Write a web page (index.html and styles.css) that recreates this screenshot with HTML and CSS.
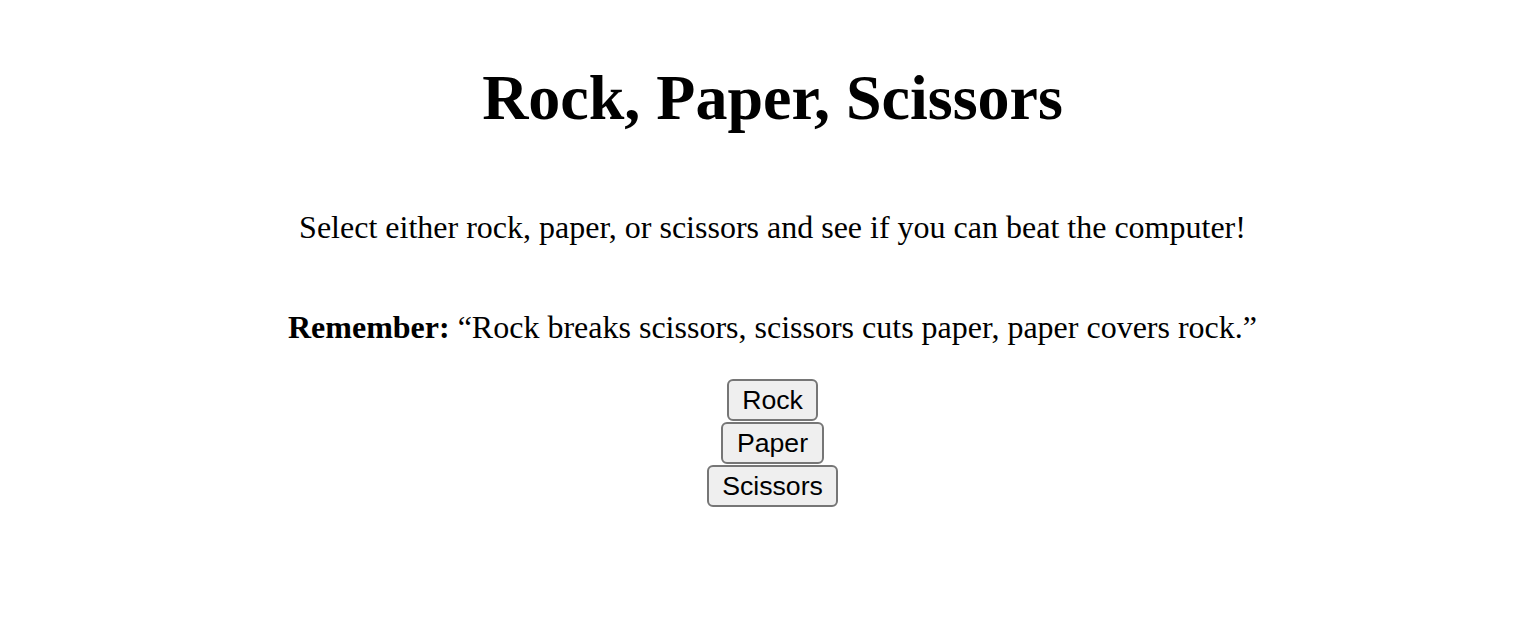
FILE: index.html
```html
<!DOCTYPE html>
<html lang="en">
<head>
<meta charset="utf-8">
<title>Rock, Paper, Scissors</title>
<link rel="stylesheet" href="styles.css">
</head>
<body>
<main class="page">
  <h1 class="title">Rock, Paper, Scissors</h1>
  <p class="intro">Select either rock, paper, or scissors and see if you can beat the computer!</p>
  <p class="rule"><strong>Remember:</strong> “Rock breaks scissors, scissors cuts paper, paper covers rock.”</p>
  <div class="choices">
    <button class="choice" type="button">Rock</button>
    <button class="choice" type="button">Paper</button>
    <button class="choice" type="button">Scissors</button>
  </div>
</main>
</body>
</html>
```

FILE: styles.css
```css
html, body {
  margin: 0;
  padding: 0;
  background: #ffffff;
}

.page {
  display: flex;
  flex-direction: column;
  align-items: center;
  padding: 61px 16px 0 23px;
  font-family: "Liberation Serif", "Times New Roman", serif;
  color: #000;
  text-align: center;
}

.title {
  margin: 0;
  font-size: 64px;
  font-weight: bold;
  line-height: 74px;
}

.intro {
  margin: 74px 0 0;
  font-size: 32px;
  line-height: 37px;
}

.rule {
  margin: 63px 0 0;
  font-size: 32px;
  line-height: 37px;
}

.choices {
  margin-top: 33px;
  display: flex;
  flex-direction: column;
  align-items: center;
  gap: 1px;
}

.choice {
  font-family: "Liberation Sans", Arial, sans-serif;
  font-size: 26.67px;
  line-height: 31px;
  padding: 3.5px 13.5px;
  border: 2px solid #767676;
  border-radius: 6px;
  background: #efefef;
  color: #000;
}
```
